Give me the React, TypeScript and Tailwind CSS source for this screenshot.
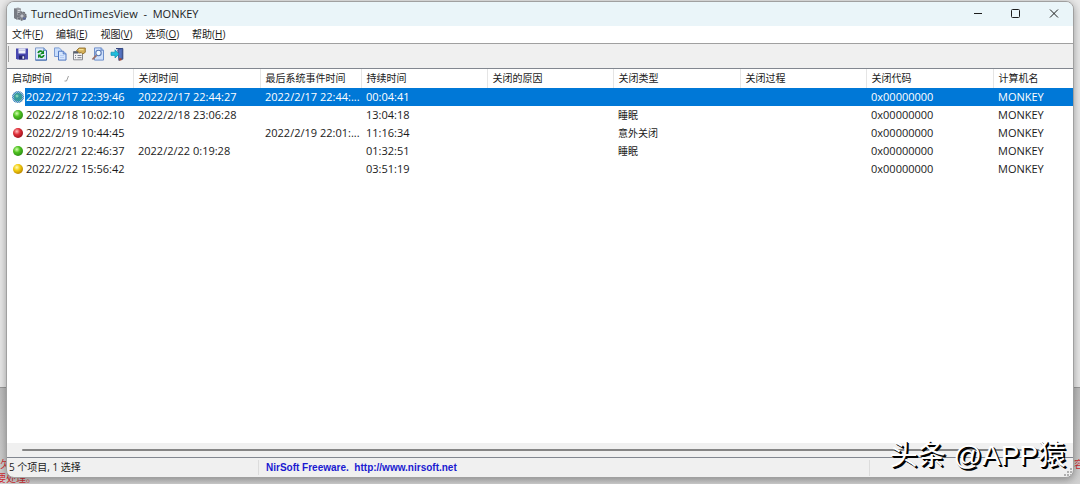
import { useState, type ReactNode } from 'react'

interface Session {
  status: 'green' | 'red' | 'yellow'
  startup: string
  shutdown: string
  lastEvent: string
  duration: string
  type: string
}

const SESSIONS: Session[] = [
  { status: 'green', startup: '2022/2/17 22:39:46', shutdown: '2022/2/17 22:44:27', lastEvent: '2022/2/17 22:44:...', duration: '00:04:41', type: '' },
  { status: 'green', startup: '2022/2/18 10:02:10', shutdown: '2022/2/18 23:06:28', lastEvent: '', duration: '13:04:18', type: '睡眠' },
  { status: 'red', startup: '2022/2/19 10:44:45', shutdown: '', lastEvent: '2022/2/19 22:01:...', duration: '11:16:34', type: '意外关闭' },
  { status: 'green', startup: '2022/2/21 22:46:37', shutdown: '2022/2/22 0:19:28', lastEvent: '', duration: '01:32:51', type: '睡眠' },
  { status: 'yellow', startup: '2022/2/22 15:56:42', shutdown: '', lastEvent: '', duration: '03:51:19', type: '' },
]

const COLUMNS = [
  { label: '启动时间', width: 'w-[126px]' },
  { label: '关闭时间', width: 'w-[127px]' },
  { label: '最后系统事件时间', width: 'w-[101px]' },
  { label: '持续时间', width: 'w-[126px]' },
  { label: '关闭的原因', width: 'w-[126px]' },
  { label: '关闭类型', width: 'w-[127px]' },
  { label: '关闭过程', width: 'w-[126px]' },
  { label: '关闭代码', width: 'w-[127px]' },
  { label: '计算机名', width: '' },
]

const MENUS = [
  { label: '文件', accel: 'F' },
  { label: '编辑', accel: 'E' },
  { label: '视图', accel: 'V' },
  { label: '选项', accel: 'O' },
  { label: '帮助', accel: 'H' },
]

const BALLS = {
  green: { light: '#d4ffb0', mid: '#4fc220', dark: '#2c8a14' },
  red: { light: '#ffc0c0', mid: '#e0303a', dark: '#9a101c' },
  yellow: { light: '#fffbc0', mid: '#f3cf10', dark: '#b98400' },
}

function Ball({ status, selected }: { status: Session['status']; selected: boolean }) {
  const ball = BALLS[status]
  const id = `ball-${status}`
  return (
    <svg className="h-3 w-3 shrink-0" viewBox="0 0 12 12">
      <defs>
        <radialGradient id={id} cx="0.38" cy="0.34" r="0.7">
          <stop offset="0" stopColor={ball.light} />
          <stop offset="0.45" stopColor={ball.mid} />
          <stop offset="1" stopColor={ball.dark} />
        </radialGradient>
        <pattern id="dither" width="2" height="2" patternUnits="userSpaceOnUse">
          <path d="M0 0h1v1H0zM1 1h1v1H1z" fill="#0078d7" />
        </pattern>
      </defs>
      {selected ? (
        <>
          <circle cx="6" cy="6" r="6" fill="#a9bcc4" />
          <circle cx="6" cy="6" r="6" fill="url(#dither)" opacity="0.7" />
          <circle cx="6" cy="6" r="4" fill="#2b9a92" opacity="0.85" />
          <circle cx="5" cy="5" r="1.5" fill="#7fd0b4" />
        </>
      ) : (
        <circle cx="6" cy="6" r="5" fill={`url(#${id})`} />
      )}
    </svg>
  )
}

function AppIcon() {
  return (
    <svg className="h-[14px] w-[14px]" viewBox="0 0 14 14">
      <path d="M1 1.5 5 .5l3 1v10l-3 1.5-4-2z" fill="#9a9da3" />
      <path d="M1 1.5 4 2.6v10.2L1 11z" fill="#777b82" />
      <path d="M4.8 3.5h2.6M4.8 5.5h2.6" stroke="#d8dadd" />
      <circle cx="9" cy="9" r="4" fill="#8d9096" stroke="#676b73" strokeWidth="1.4" strokeDasharray="1.8 1" />
      <circle cx="9" cy="9" r="2.2" fill="#c3c6ce" stroke="#6d7078" />
      <path d="M10 10.5h3v2h-3z" fill="#5c6b9a" />
    </svg>
  )
}

function SaveIcon() {
  return (
    <svg className="h-[14px] w-[14px]" viewBox="0 0 14 14">
      <path d="M1 1.5h12v11H2.2L1 11.3z" fill="#4848b0" />
      <path d="M3.5 1.5h7v5h-7z" fill="#eef0fb" />
      <path d="M3.5 3.2h7" stroke="#b9bde0" />
      <path d="M4 8.5h6v4H4z" fill="#23236e" />
      <path d="M7.4 9.2h1.8v2.6H7.4z" fill="#e8e8f8" />
    </svg>
  )
}

function RefreshIcon() {
  return (
    <svg className="h-[14px] w-[14px]" viewBox="0 0 14 14">
      <path d="M1.5.9h8.3l2.7 2.6v9.6h-11z" fill="#dfeafd" stroke="#7f9ccb" />
      <path d="M12.5 3.5v9.6h-11" fill="none" stroke="#3d67a8" />
      <path d="M9.8.9v2.6h2.7" fill="#9bb9e6" stroke="#5f83bb" strokeWidth=".8" />
      <path d="M4.2 6.2C4.5 3.9 7 3.6 8.4 4.8" fill="none" stroke="#118a22" strokeWidth="1.8" />
      <path d="M10 3v3.9H6.2zM4 11.3V7.4h3.8z" fill="#118a22" />
      <path d="M9.8 8c-.3 2.3-2.8 2.6-4.2 1.4" fill="none" stroke="#118a22" strokeWidth="1.8" />
    </svg>
  )
}

function CopyIcon() {
  return (
    <svg className="h-[14px] w-[14px]" viewBox="0 0 14 14">
      <path d="M1.5.9h4.8l2.2 2.2v6.4h-7z" fill="#c8ddfb" stroke="#7c9cd4" />
      <path d="M5.5 4.2h4.9l2.6 2.6v6.3H5.5z" fill="#d5e5fd" stroke="#4f77c2" />
      <path d="M10.2 4.3v2.6h2.7" fill="#a9c6f3" stroke="#456fbd" strokeWidth=".8" />
      <path d="M7 8.5h4M7 10.5h4" stroke="#b4ccf3" />
    </svg>
  )
}

function PropertiesIcon() {
  return (
    <svg className="h-[14px] w-[14px]" viewBox="0 0 14 14">
      <path d="M1.5 4.5h9v8.3h-9z" fill="#f3f3f4" stroke="#85878e" />
      <path d="M1.5 4.5h5v2h-5z" fill="#58606f" />
      <path d="M3 8.5h1M5.5 8.5h4M3 10.7h1M5.5 10.7h4" stroke="#7b7e89" />
      <path d="M4.5 3.5 7 1h6.3v4.3L10.7 7 9.2 5.4l-1.7.8-1-1.3z" fill="#d5b05a" stroke="#86631d" strokeWidth=".8" />
      <path d="M7 2.7h4.5" stroke="#fff0a5" />
    </svg>
  )
}

function FindIcon() {
  return (
    <svg className="h-[14px] w-[14px]" viewBox="0 0 14 14">
      <path d="M3.5.9h6.7l2.3 2.3v9.9h-9z" fill="#cfe0fb" stroke="#6f90cc" />
      <path d="M10 .9v2.4h2.5" fill="#9dbce9" stroke="#6384c3" strokeWidth=".8" />
      <circle cx="7.5" cy="6" r="2.7" fill="#f4fbff" stroke="#5877b4" strokeWidth="1.1" />
      <path d="m5.4 8.3-4 4.2" stroke="#9a6f68" strokeWidth="1.8" />
    </svg>
  )
}

function ExitIcon() {
  return (
    <svg className="h-[14px] w-[14px]" viewBox="0 0 14 14">
      <path d="M6 1.5h6.8v10.7H11" fill="#c7cfe7" stroke="#33447f" />
      <path d="m7.8 2.8 4.5-1.5v10.2l-3.4 2z" fill="#5573c0" stroke="#34487f" strokeWidth=".8" />
      <path d="M1 5.2h4V2.8l4 4.2-4 4V8.4H1z" fill="#20bddd" stroke="#0d8fae" strokeWidth=".7" />
      <path d="M9.2 11.2h2.2v2.2H9.2z" fill="#a8452b" />
    </svg>
  )
}

const TOOLS: { name: string; icon: ReactNode }[] = [
  { name: '保存', icon: <SaveIcon /> },
  { name: '刷新', icon: <RefreshIcon /> },
  { name: '复制', icon: <CopyIcon /> },
  { name: '属性', icon: <PropertiesIcon /> },
  { name: '查找', icon: <FindIcon /> },
  { name: '退出', icon: <ExitIcon /> },
]

function TitleBar() {
  return (
    <header className="flex h-6 items-center justify-between bg-[#eaf5f9] pl-[6px] text-[#1c1c1c]">
      <div className="flex items-center gap-1">
        <AppIcon />
        <h1 className="whitespace-pre text-[11px]">{'TurnedOnTimesView  -  MONKEY'}</h1>
      </div>
      <div className="flex h-full">
        <button aria-label="最小化" className="flex w-[38px] items-center justify-center">
          <svg className="h-[10px] w-[10px]" viewBox="0 0 10 10" fill="none" stroke="currentColor">
            <path d="M1 4.5h8" />
          </svg>
        </button>
        <button aria-label="最大化" className="flex w-[38px] items-center justify-center">
          <svg className="h-[10px] w-[10px]" viewBox="0 0 10 10" fill="none" stroke="currentColor">
            <rect x=".5" y=".5" width="8" height="8" rx="1" />
          </svg>
        </button>
        <button aria-label="关闭" className="flex w-[38px] items-center justify-center">
          <svg className="h-[10px] w-[10px]" viewBox="0 0 10 10" fill="none" stroke="currentColor">
            <path d="m1 .5 8 8M9 .5l-8 8" />
          </svg>
        </button>
      </div>
    </header>
  )
}

function SessionTable() {
  const [selected, setSelected] = useState(0)

  return (
    <table className="w-full table-fixed border-collapse text-left leading-4">
      <thead>
        <tr className="h-[19px]">
          {COLUMNS.map((column, index) => (
            <th
              key={column.label}
              className={`whitespace-nowrap border-r border-[#e5e5e5] p-0 pb-[2px] pl-[5px] text-[10px] font-normal last:border-r-0 ${column.width}`}
            >
              {column.label}
              {index === 0 && (
                <svg className="ml-3 inline h-[6px] w-[6px]" viewBox="0 0 6 6" fill="none" stroke="#888" strokeWidth=".8">
                  <path d="M4.5 0 2.5 5H.5" />
                </svg>
              )}
            </th>
          ))}
        </tr>
      </thead>
      <tbody>
        {SESSIONS.map((row, index) => {
          const isSelected = index === selected
          return (
            <tr
              key={row.startup}
              onClick={() => setSelected(index)}
              className={`h-[18px] text-[11px] *:whitespace-nowrap *:p-0 *:pl-[5px] ${
                isSelected ? 'bg-[#0078d7] text-white' : ''
              }`}
            >
              <td>
                <div className="-ml-[5px] flex items-center">
                  <span className={`flex h-[18px] items-center pr-px pl-[5px] ${isSelected ? 'bg-white' : ''}`}>
                    <Ball status={row.status} selected={isSelected} />
                  </span>
                  <span className="pl-px">{row.startup}</span>
                </div>
              </td>
              <td>{row.shutdown}</td>
              <td>{row.lastEvent}</td>
              <td>{row.duration}</td>
              <td />
              <td className="text-[10px]">{row.type}</td>
              <td />
              <td>0x00000000</td>
              <td>MONKEY</td>
            </tr>
          )
        })}
      </tbody>
    </table>
  )
}

// What shows of the desktop around the edges of the window
function Backdrop() {
  return (
    <div className="absolute inset-0 -z-10 flex flex-col overflow-hidden">
      <div className="flex-1 border-b border-[#999] bg-[#e9e9e9]" />
      <div className="flex h-24 flex-col justify-end bg-linear-to-b from-[#bdbdbd] to-[#d2d2d2] text-[10px] text-[#d02a30]">
        <div className="flex justify-between leading-4">
          <span className="w-[6px] overflow-hidden">欠</span>
          <span className="w-[6px] overflow-hidden">容</span>
        </div>
        <p className="-ml-1 leading-3">要处理。</p>
      </div>
    </div>
  )
}

export default function App() {
  return (
    <div className="relative isolate flex min-h-screen flex-col px-[6px] pt-px pb-[6px] font-['Open_Sans','Noto_Sans_CJK_SC',sans-serif] text-[#1a1a1a]">
      <Backdrop />
      <main className="flex flex-1 flex-col overflow-hidden rounded-lg border border-[#a0a0a0] bg-[#f0f0f0] shadow-[0_2px_8px_rgba(0,0,0,0.35)]">
        <TitleBar />
        <nav className="flex h-[18px] items-center gap-[13px] border-b border-[#a0a0a0] bg-white pl-[5px] text-[10px]">
          {MENUS.map((menu) => (
            <button key={menu.label} className="whitespace-nowrap">
              {menu.label}(<u>{menu.accel}</u>)
            </button>
          ))}
        </nav>
        <div className="flex h-6 items-center gap-[5px] pb-1 pl-px">
          <span className="mr-px h-4 w-px bg-[#a0a0a0]" />
          {TOOLS.map((tool) => (
            <button key={tool.name} aria-label={tool.name} title={tool.name}>
              {tool.icon}
            </button>
          ))}
        </div>
        <section className="flex flex-1 flex-col border-t border-[#828790] bg-white">
          <div className="flex-1">
            <SessionTable />
          </div>
          {/* Horizontal scroll bar */}
          <div className="flex h-[14px] items-center bg-[#f0f0f0] px-[15px]">
            <div className="h-[2px] flex-1 rounded-full bg-[#858585]" />
          </div>
        </section>
        <footer className="flex h-5 items-center border-t border-[#828790] text-[10px]">
          <span className="w-[252px] border-r border-[#dcdcdc] pl-[2px]">5 个项目, 1 选择</span>
          <a
            href="http://www.nirsoft.net"
            className="flex-1 whitespace-pre pl-[7px] font-['Liberation_Sans',sans-serif] font-bold text-[#1a1ad0]"
          >
            {'NirSoft Freeware.  http://www.nirsoft.net'}
          </a>
          <span className="flex h-4 w-[204px] items-end justify-end border-l border-[#dcdcdc] pr-px">
            <svg className="h-2 w-2" viewBox="0 0 8 8" fill="#b0b0b0">
              <path d="M6 0h2v2H6zM3 3h2v2H3zM6 3h2v2H6zM0 6h2v2H0zM3 6h2v2H3zM6 6h2v2H6z" />
            </svg>
          </span>
        </footer>
      </main>
      <p className="absolute right-[14px] bottom-2 font-['Liberation_Sans','Noto_Sans_CJK_SC',sans-serif] text-[28px] leading-10 text-white [text-shadow:1px_1px_0_#000,2px_2px_0_#000]">
        头条 @APP猿
      </p>
    </div>
  )
}
